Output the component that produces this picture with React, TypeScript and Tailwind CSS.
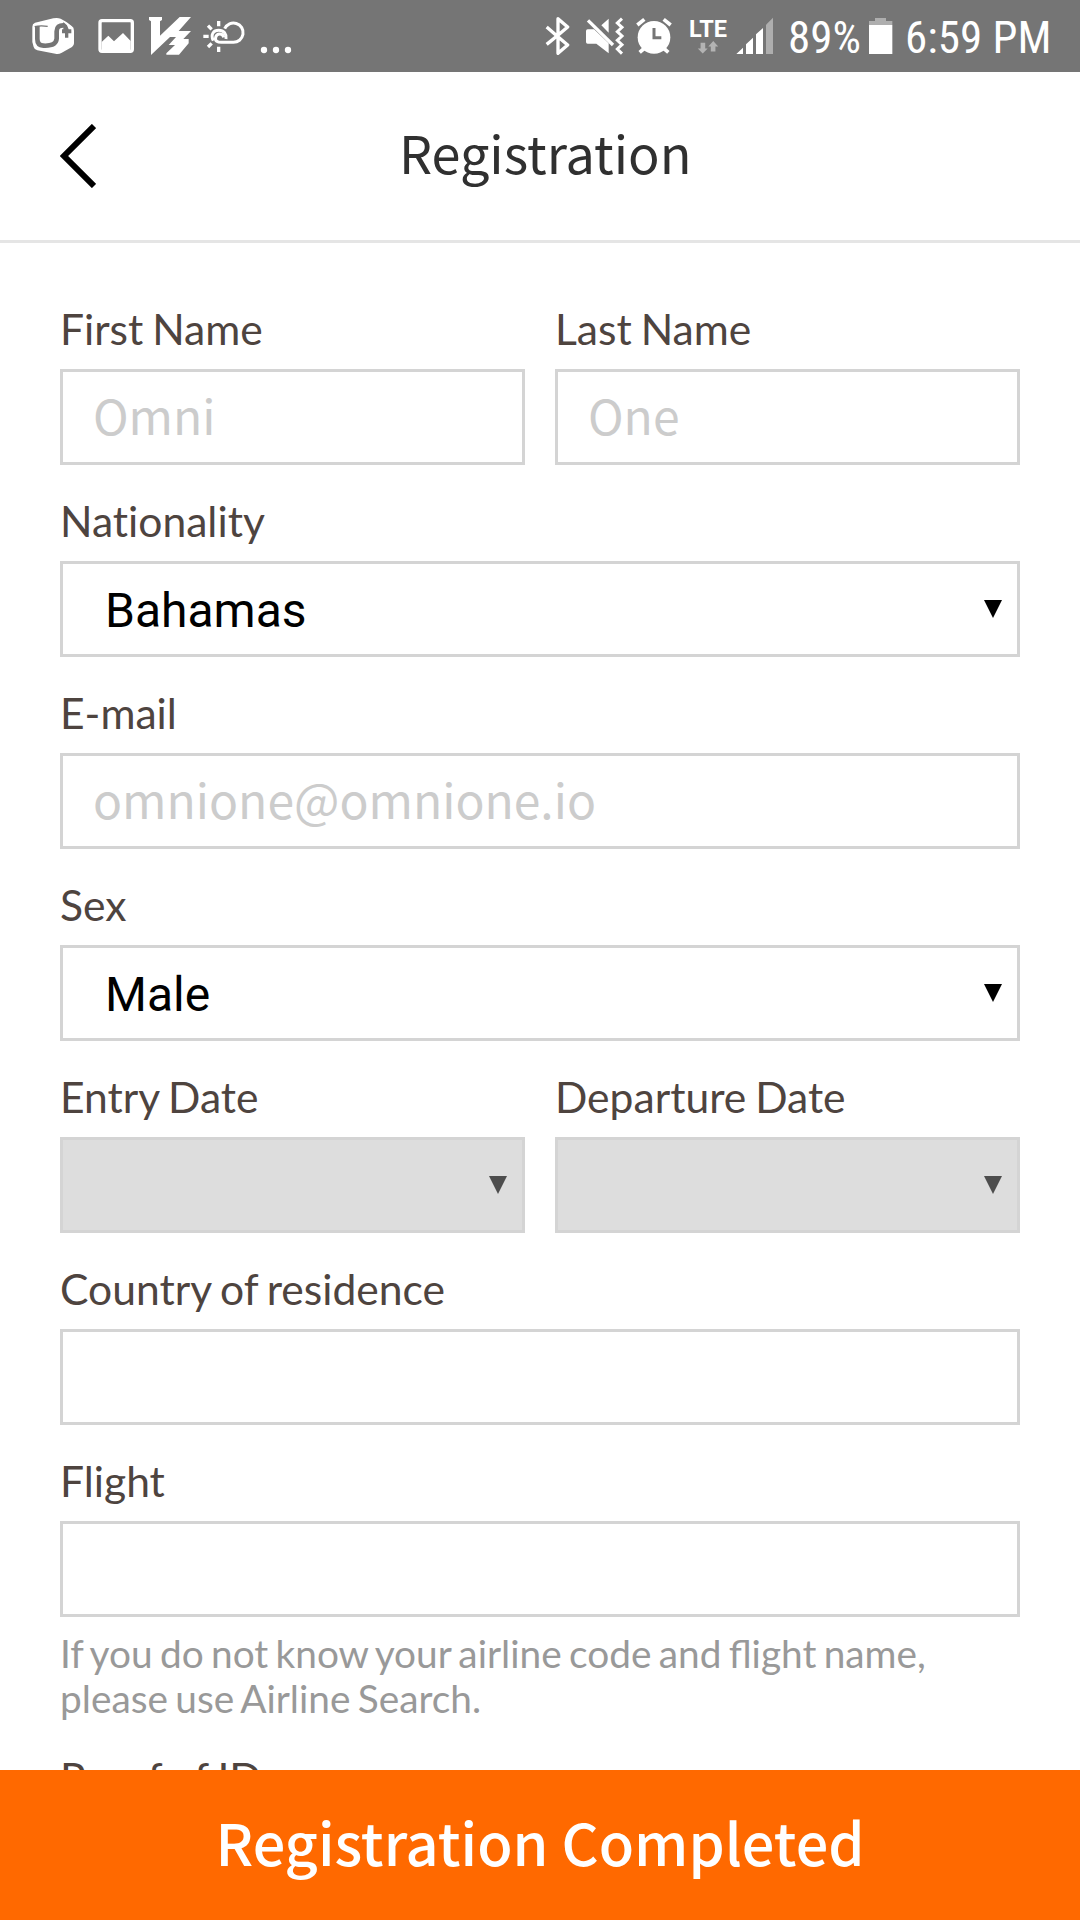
import type { ReactNode } from "react";

const cjk = "font-['Noto_Sans_CJK_KR','Noto_Sans',sans-serif]";
const labelText = "text-[42.6px] leading-12 text-[#4e443f] [word-spacing:-2px] [font-variant-ligatures:none]";

function Field({ label, children }: { label: string; children: ReactNode }) {
  return (
    <div className="min-w-0 flex-1">
      <div className={`mb-4 ${labelText}`}>{label}</div>
      {children}
    </div>
  );
}

function TextBox({ placeholder = "" }: { placeholder?: string }) {
  return (
    <input
      type="text"
      placeholder={placeholder}
      className={`block h-24 w-full border-3 border-[#d4d4d4] bg-white px-[30px] pb-[6px] text-5xl placeholder:text-[#cccccc] placeholder:opacity-100 outline-none ${cjk}`}
    />
  );
}

function SelectBox({ value = "", disabled = false }: { value?: string; disabled?: boolean }) {
  return (
    <button
      disabled={disabled}
      className={`flex h-24 w-full items-center justify-between border-3 border-[#d4d4d4] pr-[15px] pl-[42px] font-[Roboto,sans-serif] text-5xl ${
        disabled ? "bg-[#dddddd] text-[#4d4d4d]" : "bg-white text-black"
      }`}
    >
      <span className="pt-[3px]">{value}</span>
      <svg width="18" height="18" viewBox="0 0 18 18" className="fill-current">
        <path d="M0 0H18L9 18Z" />
      </svg>
    </button>
  );
}

function StatusBar() {
  return (
    <div className="flex h-18 shrink-0 items-center bg-[#757575] text-white">
      <svg className="ml-[30px]" width="45" height="72" viewBox="90 0 135 216">
        <path fill="#fff" d="M97 80Q97 71 105 68L160 55Q172 52 182 56L198 65L215 78Q222 82 222 92V130Q222 137 216 141L184 159Q176 163 166 161L112 151Q103 149 101 141L97 126Z" />
        <path fill="none" stroke="#757575" strokeWidth="14" d="M112 78V117Q112 136 130 137Q168 139 170 116V94Q170 75 192 76" />
        <path fill="none" stroke="#757575" strokeWidth="4" d="M104 80Q120 76 143 79" />
        <path fill="#757575" d="M190 66L201 76L206 88H214V100H205V113H195V100H186V88H190Z" />
        <path fill="#fff" d="M199 66L215 80L206 84Z" />
      </svg>
      <svg className="ml-[22px]" width="38" height="72" viewBox="291 0 114 216">
        <rect x="300" y="62" width="97" height="92" rx="6" fill="none" stroke="#fff" strokeWidth="10" />
        <path fill="#fff" d="M305 126L325 107L342 124L369 99L392 123V154H305Z" />
      </svg>
      <svg className="ml-[13px]" width="44" height="72" viewBox="444 0 132 216">
        <path fill="#fff" d="M447 51H486V60L480 64V107L539 51H573L536 93H573L550 117H566V130L537 164H499V160L525 135H506L528 111H510L453 165V64L447 60Z" />
      </svg>
      <svg className="ml-[10px]" width="44" height="72" viewBox="606 0 132 216" fill="none" stroke="#fff">
        <path strokeWidth="9" d="M671 112C668 98 650 100 647 112C644 123 653 127 664 127H699A29 29 0 1 0 674 86" />
        <path strokeWidth="9" d="M640 122C630 102 642 91 656 91C672 91 680 102 678 117" />
        <path strokeWidth="10" d="M656 63V79M656 140V156M610 109H626M624 77L635 88M624 141L635 130" />
      </svg>
      <svg className="ml-[14px]" width="32" height="72" viewBox="780 0 96 216" fill="#fff">
        <circle cx="792" cy="150" r="9.5" />
        <circle cx="828" cy="150" r="9.5" />
        <circle cx="864" cy="150" r="9.5" />
      </svg>
      <div className="flex-1" />
      <svg width="25" height="72" viewBox="75 0 75 216" fill="none" stroke="#fff" strokeWidth="10">
        <path strokeLinejoin="round" d="M80 81L112 109L143 135L114 160V56L143 81L112 107L80 133" />
      </svg>
      <svg className="ml-[15px]" width="40" height="72" viewBox="195 0 120 216">
        <path fill="#fff" d="M203 88H222L266 130V160L229 131H203Q198 131 198 126V93Q198 88 203 88ZM244 76L266 56V98Z" />
        <path stroke="#fff" strokeWidth="10" d="M204 61L279 135" />
        <path fill="none" stroke="#fff" strokeWidth="9" d="M306 56L292 69L306 82L292 95L306 108L292 121L306 134L292 147L306 161" />
      </svg>
      <svg className="ml-[10px]" width="38" height="72" viewBox="345 0 114 216">
        <circle cx="402" cy="112" r="49" fill="#fff" />
        <path stroke="#fff" strokeWidth="11" d="M352 75L373 58M431 58L452 75M359 157L374 144M445 157L430 144" />
        <path fill="none" stroke="#757575" strokeWidth="9" d="M402 84V113H424" />
      </svg>
      <div className="ml-[15px] flex h-[36px] w-[40px] flex-col items-center">
        <span className="font-[Roboto,sans-serif] text-[23.5px] leading-[22px] font-bold">LTE</span>
        <svg className="mt-px" width="22" height="14" viewBox="0 0 66 42" fill="#b3b3b3">
          <path d="M9 6H24V24H32L16 40L0 24H9ZM42 34H57V18H66L50 0L34 18H42Z" />
        </svg>
      </div>
      <svg className="ml-[8px]" width="38" height="72" viewBox="648 0 114 216">
        <path fill="#fff" d="M649 162L669 143V162ZM678 133L699 113V162H678ZM708 103L729 84V162H708Z" />
        <path fill="#aeaeae" d="M738 74L759 53V162H738Z" />
      </svg>
      <div className="ml-[14px] w-[80px] pt-[2px] font-[Roboto,sans-serif] text-[45px] leading-none whitespace-nowrap [font-stretch:75%]">89%</div>
      <svg width="25" height="72" viewBox="264 0 75 216">
        <path fill="#aeaeae" d="M285 54H318V63H337V75H267V63H285Z" />
        <path fill="#fff" d="M267 75H337V162H267Z" />
      </svg>
      <div className="ml-[12px] w-[175px] pt-[2px] font-[Roboto,sans-serif] text-[45px] leading-none whitespace-nowrap [font-stretch:75%]">6:59 PM</div>
    </div>
  );
}

export default function App() {
  return (
    <div className="flex h-[1920px] w-[1080px] flex-col overflow-hidden bg-white font-[Lato,sans-serif]">
      <StatusBar />
      <header className="flex h-[171px] shrink-0 items-center border-b-3 border-[#e5e5e5] pl-[60px]">
        <svg width="36" height="64" viewBox="0 0 36 64" fill="none" stroke="#000" strokeWidth="6">
          <path d="M34 2L4 32L34 62" />
        </svg>
        <h1 className={`ml-[303px] pb-[9px] text-[52.2px] leading-none text-[#303030] ${cjk}`}>Registration</h1>
      </header>
      <main className="flex min-h-0 flex-1 flex-col gap-8 overflow-hidden px-[60px] pt-[62px]">
        <div className="flex gap-[30px]">
          <Field label="First Name"><TextBox placeholder="Omni" /></Field>
          <Field label="Last Name"><TextBox placeholder="One" /></Field>
        </div>
        <div className="flex"><Field label="Nationality"><SelectBox value="Bahamas" /></Field></div>
        <div className="flex"><Field label="E-mail"><TextBox placeholder="omnione@omnione.io" /></Field></div>
        <div className="flex"><Field label="Sex"><SelectBox value="Male" /></Field></div>
        <div className="flex gap-[30px]">
          <Field label="Entry Date"><SelectBox disabled /></Field>
          <Field label="Departure Date"><SelectBox disabled /></Field>
        </div>
        <div className="flex"><Field label="Country of residence"><TextBox /></Field></div>
        <div className="shrink-0">
          <Field label="Flight"><TextBox /></Field>
          <p className="mt-[14px] mb-px text-[38.8px] leading-[45px] text-[#999999] [word-spacing:-2.6px]">
            If you do not know your airline code and flight name,
            <br />
            please use Airline Search.
          </p>
        </div>
        <div className={`shrink-0 ${labelText}`}>Proof of ID</div>
      </main>
      <button className={`h-[150px] shrink-0 bg-[#ff6900] pb-[6px] text-[57.6px] leading-none font-medium text-white ${cjk}`}>
        Registration Completed
      </button>
    </div>
  );
}
